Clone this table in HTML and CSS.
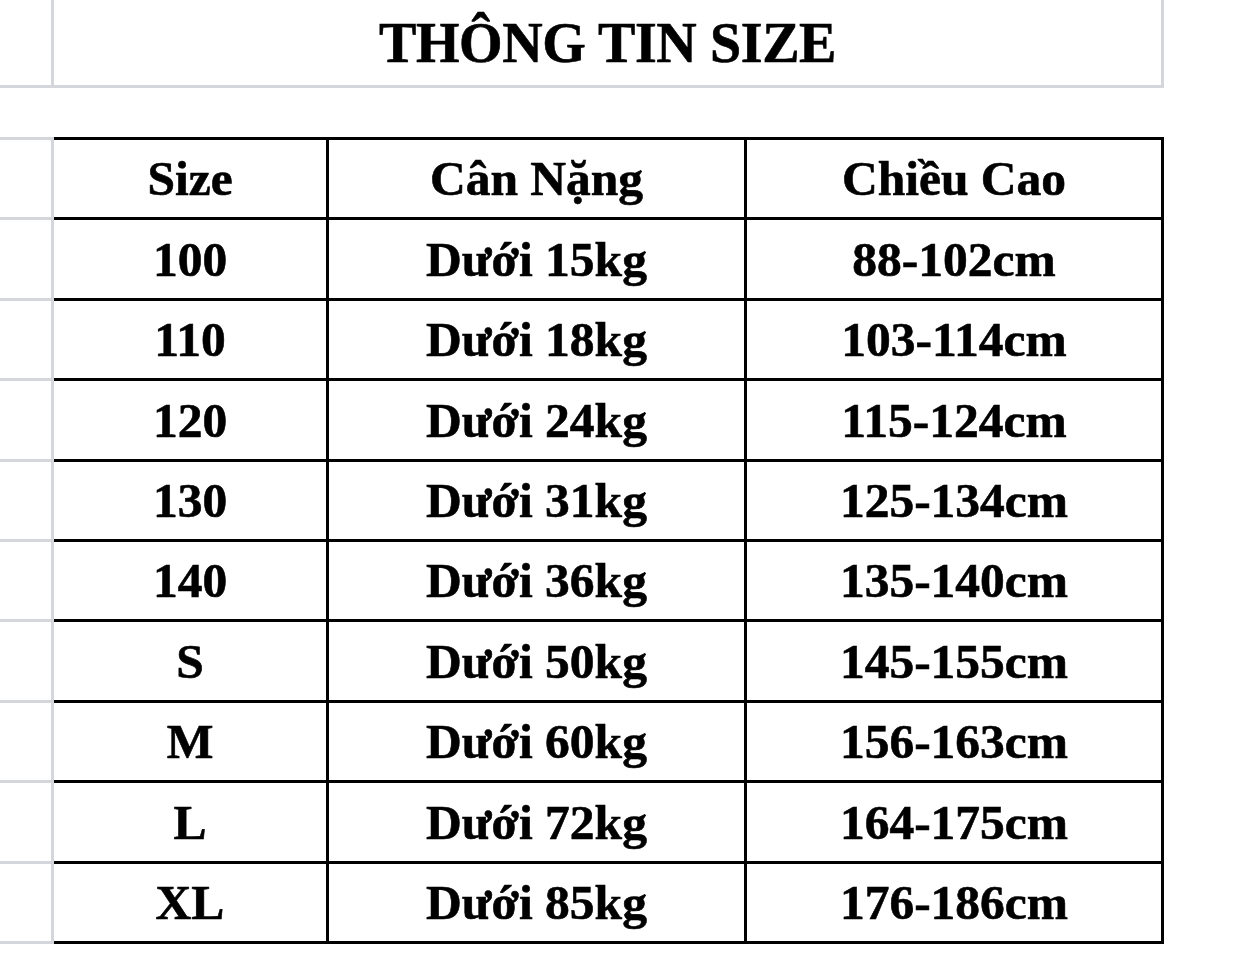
FILE: index.html
```html
<!DOCTYPE html>
<html lang="vi">
<head>
<meta charset="utf-8">
<title>Thông tin size</title>
<link rel="stylesheet" href="styles.css">
</head>
<body>
<div class="sheet">
  <div class="title-row">
    <div class="gutter-cell"></div>
    <div class="title-cell">THÔNG TIN SIZE</div>
  </div>
  <div class="table-row">
    <div class="gutter">
      <div></div><div></div><div></div><div></div><div></div>
      <div></div><div></div><div></div><div></div><div></div>
    </div>
    <div class="size-table">
      <div class="cell">Size</div><div class="cell">Cân Nặng</div><div class="cell">Chiều Cao</div>
      <div class="cell">100</div><div class="cell">Dưới 15kg</div><div class="cell">88-102cm</div>
      <div class="cell">110</div><div class="cell">Dưới 18kg</div><div class="cell">103-114cm</div>
      <div class="cell">120</div><div class="cell">Dưới 24kg</div><div class="cell">115-124cm</div>
      <div class="cell">130</div><div class="cell">Dưới 31kg</div><div class="cell">125-134cm</div>
      <div class="cell">140</div><div class="cell">Dưới 36kg</div><div class="cell">135-140cm</div>
      <div class="cell">S</div><div class="cell">Dưới 50kg</div><div class="cell">145-155cm</div>
      <div class="cell">M</div><div class="cell">Dưới 60kg</div><div class="cell">156-163cm</div>
      <div class="cell">L</div><div class="cell">Dưới 72kg</div><div class="cell">164-175cm</div>
      <div class="cell">XL</div><div class="cell">Dưới 85kg</div><div class="cell">176-186cm</div>
    </div>
  </div>
</div>
</body>
</html>
```

FILE: styles.css
```css
* { box-sizing: border-box; }
html, body {
  margin: 0;
  padding: 0;
  background: #ffffff;
}
body {
  width: 1242px;
  height: 970px;
  overflow: hidden;
  font-family: "Liberation Serif", "Times New Roman", serif;
  font-weight: 700;
  color: #000;
}
.sheet {
  display: flex;
  flex-direction: column;
  gap: 49px;
}
.title-row {
  display: flex;
  height: 88px;
}
.gutter-cell {
  width: 51px;
  border-bottom: 3px solid #d5d5dc;
}
.title-cell {
  width: 1113px;
  border-left: 3px solid #d5d5dc;
  border-right: 3px solid #d5d5dc;
  border-bottom: 3px solid #d5d5dc;
  display: flex;
  align-items: center;
  justify-content: center;
  font-size: 56px;
  letter-spacing: -0.4px;
  line-height: 1;
  padding-top: 1px;
  -webkit-text-stroke: 0.6px #000;
}
.table-row {
  display: flex;
}
.gutter {
  width: 54px;
  background: #d5d5dc;
  padding: 3px 3px 3px 0;
  display: grid;
  grid-template-columns: 51px;
  grid-auto-rows: 77.4px;
  row-gap: 3px;
}
.gutter > div { background: #fff; }
.size-table {
  background: #000;
  padding: 3px 3px 3px 0;
  display: grid;
  grid-template-columns: 272px 415px 414px;
  grid-auto-rows: 77.4px;
  gap: 3px;
}
.cell {
  background: #fff;
  display: flex;
  align-items: center;
  justify-content: center;
  font-size: 49.5px;
  line-height: 1;
  padding-top: 1px;
  -webkit-text-stroke: 0.6px #000;
}
```
